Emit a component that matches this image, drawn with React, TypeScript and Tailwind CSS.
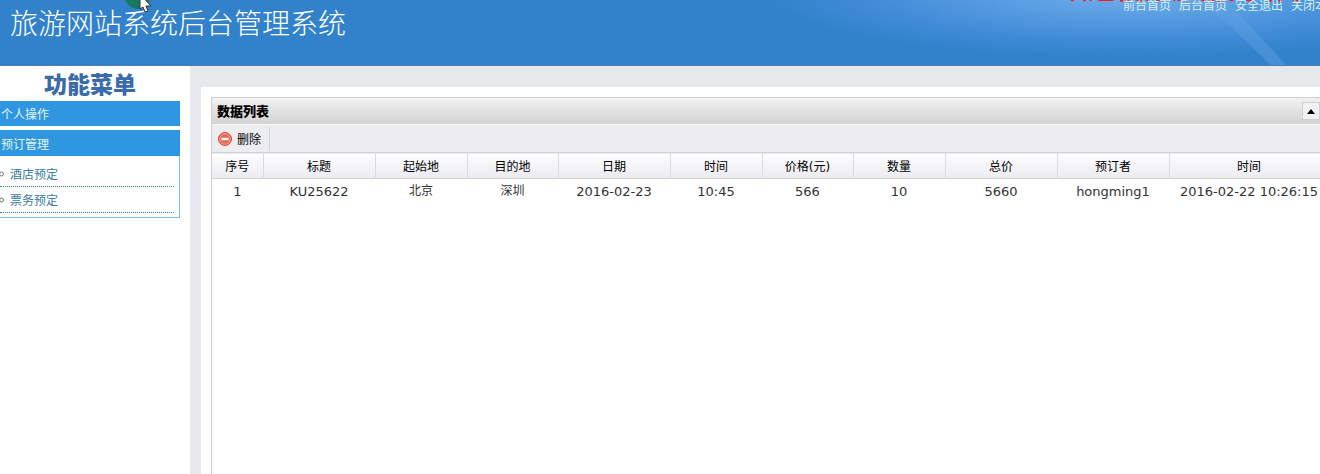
import clsx from "clsx";

const TOP_LINKS = ["前台首页", "后台首页", "安全退出", "关闭本页"];

const MENU_ITEMS = ["酒店预定", "票务预定"];

interface Column {
  title: string;
  width: string;
  cjk?: boolean;
}

const COLUMNS: Column[] = [
  { title: "序号", width: "w-[51px]" },
  { title: "标题", width: "w-[112px]" },
  { title: "起始地", width: "w-[92px]", cjk: true },
  { title: "目的地", width: "w-[91px]", cjk: true },
  { title: "日期", width: "w-[112px]" },
  { title: "时间", width: "w-[92px]" },
  { title: "价格(元)", width: "w-[91px]" },
  { title: "数量", width: "w-[92px]" },
  { title: "总价", width: "w-[112px]" },
  { title: "预订者", width: "w-[112px]" },
  { title: "时间", width: "w-[160px]" },
];

const ROWS = [
  ["1", "KU25622", "北京", "深圳", "2016-02-23", "10:45", "566", "10", "5660", "hongming1", "2016-02-22 10:26:15"],
];

export default function App() {
  return (
    <div className="flex min-h-screen flex-col overflow-hidden bg-[#fdfefd] font-['DejaVu_Sans','Noto_Sans_CJK_SC',sans-serif] text-xs text-black">
      <TopBar />
      <div className="flex flex-1">
        <SideMenu />
        <main className="flex min-w-0 flex-1 flex-col bg-[#e6e8ec] pt-[21px] pl-[11px]">
          <div className="flex flex-1 bg-[#fdfefd] pt-[10px] pl-[10px]">
            <DataPanel />
          </div>
        </main>
      </div>
    </div>
  );
}

function TopBar() {
  return (
    <header className="relative flex h-[66px] items-start justify-between overflow-hidden border-b border-[#4a80b0] bg-[#3182ca] font-['Noto_Sans_CJK_SC',sans-serif]">
      {/* glow and light beam */}
      <svg className="absolute top-0 right-0" width="560" height="66" viewBox="0 0 560 66">
        <defs>
          <radialGradient id="glow" gradientUnits="userSpaceOnUse" cx="0" cy="0" r="1" gradientTransform="translate(370 -8) scale(370 66)">
            <stop offset="0" stopColor="#74aeee" />
            <stop offset="0.45" stopColor="#5399df" />
            <stop offset="0.8" stopColor="#3c88d4" />
            <stop offset="1" stopColor="#3182ca" />
          </radialGradient>
          <linearGradient id="beam" x1="0" y1="0" x2="1" y2="1">
            <stop offset="0" stopColor="#8cc0f0" stopOpacity="0" />
            <stop offset="1" stopColor="#5c9fde" stopOpacity="0.5" />
          </linearGradient>
        </defs>
        <rect width="560" height="66" fill="url(#glow)" />
        <path d="M436 0H466L527 66H512L470 26Z" fill="url(#beam)" />
      </svg>
      <h1 className="relative pt-px pl-[10px] text-[28px] leading-[42px] font-light text-white">
        旅游网站系统后台管理系统
      </h1>
      <p className="absolute -top-[27px] left-full -ml-[260px] text-[28px] leading-[28px] font-bold whitespace-nowrap text-[#e8201c]">
        欢迎使用旅游网站系统
      </p>
      <nav className="relative -mr-[19px] flex gap-2 leading-[10px] text-[#d6f2ee]">
        {TOP_LINKS.map((link) => (
          <a key={link} href="#" className="whitespace-nowrap">{link}</a>
        ))}
      </nav>
      <svg className="absolute top-0 left-[124px]" width="32" height="14" viewBox="0 0 32 14">
        <path d="M1 0C4 6 9 9 14 9C19 9 24 5 26 0Z" fill="#147a60" />
        <path d="M16 -6V9L19 7L21 12L24 11L22 6H27Z" fill="#fff" stroke="#333" strokeWidth="1" />
      </svg>
    </header>
  );
}

function SideMenu() {
  return (
    <aside className="w-[190px] shrink-0 pr-[10px] font-['Noto_Sans_CJK_SC',sans-serif]">
      <h2 className="h-[35px] text-center text-[23px] leading-[35px] font-black text-[#3a6ba8]">功能菜单</h2>
      <button type="button" className="block h-[25px] w-full bg-[#2f96e2] pl-px text-left leading-[26px] text-[#e3f7e6]">
        个人操作
      </button>
      <button type="button" className="mt-[4px] block h-[26px] w-full bg-[#2f96e2] pl-px text-left leading-[28px] text-[#e3f7e6]">
        预订管理
      </button>
      <ul className="border-r border-b border-r-[#7cc0e8] border-b-[#7cc0e8] pt-[5px] pr-[5px] pb-[4px]">
        {MENU_ITEMS.map((item) => (
          <li key={item} className="flex h-[26px] items-center border-b border-dotted border-b-[#3f7fa0]">
            <svg width="5" height="6" viewBox="0 0 5 6">
              <circle cx="1.5" cy="3" r="2" fill="none" stroke="#777" />
            </svg>
            <a href="#" className="pl-[5px] text-[#3b7c9e]">{item}</a>
          </li>
        ))}
      </ul>
    </aside>
  );
}

function DataPanel() {
  return (
    <section className="min-w-[1118px] flex-1 border-t border-l border-[#d0d0d0]">
      <div className="flex h-[27px] items-center justify-between border-b border-[#f8f8f8] bg-linear-to-b from-[#f2f1f3] to-[#d4d3d3] pr-[9px] pl-[5px]">
        <h3 className="font-['Noto_Sans_CJK_SC',sans-serif] text-[13px] font-black">数据列表</h3>
        <button type="button" aria-label="收起" className="flex h-[18px] w-[18px] items-center justify-center border border-[#d0d0d0] bg-[#f1f0f2]">
          <svg width="8" height="5" viewBox="0 0 8 5">
            <path d="M0 5L4 0L8 5Z" fill="#000" />
          </svg>
        </button>
      </div>
      <div className="flex h-[27px] items-center bg-[#edecef]">
        <button type="button" className="flex h-[24px] items-center gap-[5px] border-r border-[#d2d2d4] pr-[8px] pl-[6px]">
          <svg width="14" height="14" viewBox="0 0 14 14">
            <circle cx="7" cy="7" r="6.5" fill="#e96a57" stroke="#c9503f" />
            <circle cx="7" cy="7" r="5.3" fill="none" stroke="#f5a899" strokeWidth="0.8" />
            <rect x="3.5" y="5.8" width="7" height="2.4" fill="#fff" />
          </svg>
          <span className="pt-[2px]">删除</span>
        </button>
      </div>
      <table className="w-full table-fixed border-collapse text-center">
        <thead>
          <tr className="h-[26px] border-y border-[#d0d0d2] bg-linear-to-b from-[#fdfdfe] to-[#ecebf0]">
            {COLUMNS.map((col, i) => (
              <th key={i} className={clsx("border-r border-[#dcdce0] p-0 pt-[2px] font-normal", col.width)}>
                {col.title}
              </th>
            ))}
          </tr>
        </thead>
        <tbody>
          {ROWS.map((row) => (
            <tr key={row[0]} className="h-[25px] text-[#333]">
              {row.map((cell, i) => (
                <td key={i} className={clsx("p-0 whitespace-nowrap", COLUMNS[i].cjk ? "text-xs" : "text-[13px]")}>
                  {cell}
                </td>
              ))}
            </tr>
          ))}
        </tbody>
      </table>
    </section>
  );
}
